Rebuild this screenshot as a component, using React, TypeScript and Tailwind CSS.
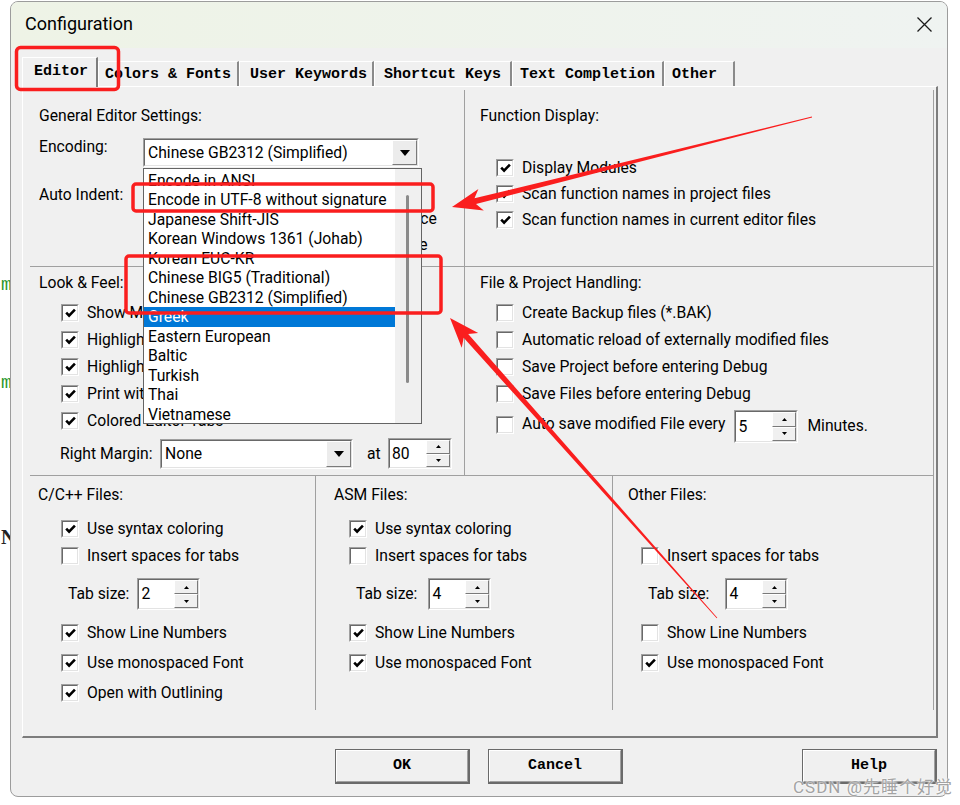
import React from "react";

const SUNKEN_OUT = "border border-t-[#a0a0a0] border-l-[#a0a0a0] border-b-white border-r-white";
const SUNKEN_IN = "border border-t-[#696969] border-l-[#696969] border-b-[#e3e3e3] border-r-[#e3e3e3]";

function CheckBox({ checked }: { checked?: boolean }) {
  return (
    <span className={`flex h-[18px] w-[18px] shrink-0 ${SUNKEN_OUT}`}>
      <span className={`flex flex-1 items-center justify-center bg-white ${SUNKEN_IN}`}>
        {checked ? (
          <svg width="11" height="10" viewBox="0 0 11 10">
            <path d="M1.2 4.6 L4.1 7.6 L9.9 1.6" fill="none" stroke="#000" strokeWidth="2.6" />
          </svg>
        ) : null}
      </span>
    </span>
  );
}

function CheckRow({ label, checked, h }: { label: string; checked?: boolean; h: string }) {
  return (
    <div className={`flex items-center gap-[8px] ${h}`}>
      <CheckBox checked={checked} />
      <span className="whitespace-nowrap leading-[20px]">{label}</span>
    </div>
  );
}

function SpinBtn({ up }: { up?: boolean }) {
  return (
    <div className="flex flex-1 items-center justify-center border border-t-white border-l-white border-b-[#7a7a7a] border-r-[#7a7a7a] bg-[#f0f0f0]">
      <svg width="5" height="3" viewBox="0 0 5 3">
        <polygon points={up ? "2.5,0 5,3 0,3" : "0,0 5,0 2.5,3"} fill="#000" />
      </svg>
    </div>
  );
}

function Spinner({ value, size }: { value: string; size: string }) {
  return (
    <div className={`flex shrink-0 ${SUNKEN_OUT} ${size}`}>
      <div className={`flex flex-1 bg-white ${SUNKEN_IN}`}>
        <div className="flex flex-1 items-center pl-[2px] leading-[20px]">{value}</div>
        <div className="flex w-[24px] flex-col">
          <SpinBtn up />
          <SpinBtn />
        </div>
      </div>
    </div>
  );
}

function Combo({ text, size }: { text: string; size: string }) {
  return (
    <div className={`flex shrink-0 ${SUNKEN_OUT} ${size}`}>
      <div className={`flex flex-1 items-center bg-white ${SUNKEN_IN}`}>
        <div className="flex-1 whitespace-nowrap pl-[3px] leading-[20px]">{text}</div>
        <div className="flex h-full w-[25px] items-center justify-center border border-t-white border-l-white border-b-[#7a7a7a] border-r-[#7a7a7a] bg-[#ececec]">
          <svg width="10" height="6" viewBox="0 0 10 6">
            <polygon points="0,0 10,0 5,6" fill="#000" />
          </svg>
        </div>
      </div>
    </div>
  );
}

const ENCODINGS = [
  "Encode in ANSI",
  "Encode in UTF-8 without signature",
  "Japanese Shift-JIS",
  "Korean Windows 1361 (Johab)",
  "Korean EUC-KR",
  "Chinese BIG5 (Traditional)",
  "Chinese GB2312 (Simplified)",
  "Greek",
  "Eastern European",
  "Baltic",
  "Turkish",
  "Thai",
  "Vietnamese",
  "Hebrew",
];

function EncodingList() {
  return (
    <div className="absolute left-0 top-[30px] z-20 flex h-[256px] w-[279px] overflow-hidden border border-[#646464] bg-white">
      <div className="w-[251px] shrink-0 pt-[1.5px]">
        {ENCODINGS.map((e) => (
          <div
            key={e}
            className={
              e === "Greek"
                ? "h-[19.5px] whitespace-nowrap bg-[#0078d7] pl-[4px] leading-[19.5px] text-white"
                : "h-[19.5px] whitespace-nowrap pl-[4px] leading-[19.5px]"
            }
          >
            {e}
          </div>
        ))}
      </div>
      <div className="flex-1 bg-[#f0f0f0]">
        <div className="ml-[11px] mt-[26px] h-[188px] w-[3px] rounded-full bg-[#8a8a8a]" />
      </div>
    </div>
  );
}

const TABS = [
  { label: "Editor", w: "w-[76px]", pl: "pl-[11px]", active: true },
  { label: "Colors & Fonts", w: "w-[141px]", pl: "pl-[6px]" },
  { label: "User Keywords", w: "w-[135px]", pl: "pl-[10px]" },
  { label: "Shortcut Keys", w: "w-[138px]", pl: "pl-[9px]" },
  { label: "Text Completion", w: "w-[152px]", pl: "pl-[7px]" },
  { label: "Other", w: "w-[71px]", pl: "pl-[7px]" },
];

function TabStrip() {
  return (
    <div className="flex h-[38px] items-end pl-[11px] font-['Liberation_Mono',monospace] text-[15px] font-bold">
      {TABS.map((t) =>
        t.active ? (
          <div
            key={t.label}
            className={`relative z-10 -mb-[1px] h-[30px] shrink-0 border-l border-t border-white border-r-2 border-r-[#7d7d7d] bg-[#f0f0f0] pt-[4px] leading-[19px] ${t.w} ${t.pl}`}
          >
            {t.label}
          </div>
        ) : (
          <div
            key={t.label}
            className={`h-[25px] shrink-0 whitespace-pre border-l border-t border-white border-r-2 border-r-[#8a8a8a] pt-[3px] leading-[19px] ${t.w} ${t.pl}`}
          >
            {t.label}
          </div>
        )
      )}
    </div>
  );
}

function GeneralSettings() {
  return (
    <div className="relative w-[435px] shrink-0 border-r border-[#a0a0a0] pl-[9px] pt-[16px]">
      <div className="leading-[20px]">General Editor Settings:</div>
      <div className="mt-[12px] flex">
        <div className="-mt-[1px] w-[104px] leading-[20px]">Encoding:</div>
        <div className="relative">
          <Combo text="Chinese GB2312 (Simplified)" size="h-[29px] w-[276px]" />
          <EncodingList />
        </div>
      </div>
      <div className="mt-[14px] flex items-start">
        <div className="flex h-[28px] w-[104px] items-center">Auto Indent:</div>
        <Combo text="Smart" size="h-[28px] w-[118px]" />
        <div className="-mt-[1px] ml-[25px] flex flex-col">
          <CheckRow label="Virtual Spaces" h="h-[26px]" />
          <CheckRow label="View White Space" h="h-[26px]" />
          <CheckRow label="View End of Line" h="h-[26px]" />
        </div>
      </div>
    </div>
  );
}

function FunctionDisplay() {
  return (
    <div className="flex-1 pl-[15px] pt-[16px]">
      <div className="leading-[20px]">Function Display:</div>
      <div className="mt-[29px] pl-[16px]">
        <CheckRow label="Display Modules" checked h="h-[26px]" />
        <CheckRow label="Scan function names in project files" checked h="h-[26px]" />
        <CheckRow label="Scan function names in current editor files" checked h="h-[26px]" />
      </div>
    </div>
  );
}

function LookAndFeel() {
  return (
    <div className="w-[435px] shrink-0 border-r border-[#a0a0a0] pl-[9px] pt-[6px]">
      <div className="leading-[20px]">Look &amp; Feel:</div>
      <div className="mt-[6px] pl-[22px]">
        <CheckRow label="Show Message Dialogs" checked h="h-[27px]" />
        <CheckRow label="Highlight Current Line" checked h="h-[27px]" />
        <CheckRow label="Highlight matching Braces" checked h="h-[27px]" />
        <CheckRow label="Print with syntax coloring" checked h="h-[27px]" />
        <CheckRow label="Colored Editor Tabs" checked h="h-[27px]" />
      </div>
      <div className="mt-[4px] flex items-center pl-[21px]">
        <span className="w-[100px] whitespace-nowrap">Right Margin:</span>
        <Combo text="None" size="h-[30px] w-[193px]" />
        <span className="ml-[14px] w-[21px]">at</span>
        <Spinner value="80" size="h-[31px] w-[64px]" />
      </div>
    </div>
  );
}

function FileHandling() {
  return (
    <div className="flex-1 pl-[15px] pt-[6px]">
      <div className="leading-[20px]">File &amp; Project Handling:</div>
      <div className="mt-[6px] pl-[16px]">
        <CheckRow label="Create Backup files (*.BAK)" h="h-[27px]" />
        <CheckRow label="Automatic reload of externally modified files" h="h-[27px]" />
        <CheckRow label="Save Project before entering Debug" h="h-[27px]" />
        <CheckRow label="Save Files before entering Debug" h="h-[27px]" />
        <div className="mt-[3px] flex items-start">
          <div className="mt-[6px]">
            <CheckBox />
          </div>
          <span className="ml-[8px] mt-[4px] whitespace-nowrap leading-[20px]">Auto save modified File every</span>
          <div className="ml-[9px]">
            <Spinner value="5" size="h-[33px] w-[64px]" />
          </div>
          <span className="ml-[9px] mt-[6px] leading-[20px]">Minutes.</span>
        </div>
      </div>
    </div>
  );
}

function FileTypeColumn({
  title,
  outer,
  checks,
  tabLabel,
  tab,
  tabValue,
  syntax,
  lineNumbers,
  outlining,
}: {
  title: string;
  outer: string;
  checks: string;
  tabLabel: string;
  tab: string;
  tabValue: string;
  syntax: boolean | null;
  lineNumbers: boolean;
  outlining: boolean;
}) {
  return (
    <div className={outer}>
      <div className="leading-[20px]">{title}</div>
      <div className={`mt-[10px] ${checks}`}>
        {syntax === null ? (
          <div className="h-[27px]" />
        ) : (
          <CheckRow label="Use syntax coloring" checked={syntax} h="h-[27px]" />
        )}
        <CheckRow label="Insert spaces for tabs" h="h-[27px]" />
      </div>
      <div className={`mt-[9px] flex h-[32px] items-center ${tabLabel}`}>
        <span className="whitespace-nowrap">Tab size:</span>
        <div className={tab}>
          <Spinner value={tabValue} size="h-[32px] w-[63px]" />
        </div>
      </div>
      <div className={`mt-[8px] ${checks}`}>
        <CheckRow label="Show Line Numbers" checked={lineNumbers} h="h-[30px]" />
        <CheckRow label="Use monospaced Font" checked h="h-[30px]" />
        {outlining ? <CheckRow label="Open with Outlining" checked h="h-[30px]" /> : null}
      </div>
    </div>
  );
}

function EditorPage() {
  return (
    <div className="ml-[11px] w-[916px] border-l border-t border-white border-b-2 border-r-2 border-b-[#7d7d7d] border-r-[#7d7d7d] pl-[7px] pt-[3px]">
      <div className="w-[904px] border-r border-[#a0a0a0]">
        <div className="flex h-[177px] border-b border-[#a0a0a0]">
          <GeneralSettings />
          <FunctionDisplay />
        </div>
        <div className="flex h-[209px] border-b border-[#a0a0a0]">
          <LookAndFeel />
          <FileHandling />
        </div>
        <div className="flex h-[234px]">
          <FileTypeColumn
            title="C/C++ Files:"
            outer="w-[286px] shrink-0 border-r border-[#a0a0a0] pl-[8px] pt-[9px]"
            checks="pl-[23px]"
            tabLabel="pl-[30px]"
            tab="ml-[8px]"
            tabValue="2"
            syntax={true}
            lineNumbers={true}
            outlining={true}
          />
          <FileTypeColumn
            title="ASM Files:"
            outer="w-[297px] shrink-0 border-r border-[#a0a0a0] pl-[18px] pt-[9px]"
            checks="pl-[15px]"
            tabLabel="pl-[22px]"
            tab="ml-[11px]"
            tabValue="4"
            syntax={true}
            lineNumbers={true}
            outlining={false}
          />
          <FileTypeColumn
            title="Other Files:"
            outer="flex-1 pl-[15px] pt-[9px]"
            checks="pl-[13px]"
            tabLabel="pl-[20px]"
            tab="ml-[16px]"
            tabValue="4"
            syntax={null}
            lineNumbers={false}
            outlining={false}
          />
        </div>
      </div>
      <div className="h-[26px]" />
    </div>
  );
}

function DlgButton({ label, cls }: { label: string; cls: string }) {
  return (
    <div className={`flex h-[35px] w-[135px] shrink-0 border border-b-2 border-r-2 border-[#6a6a6a] ${cls}`}>
      <div className="flex flex-1 items-center justify-center border border-t-white border-l-white border-b-[#a0a0a0] border-r-[#a0a0a0] bg-[#f0f0f0] font-['Liberation_Mono',monospace] text-[15px] font-bold">
        {label}
      </div>
    </div>
  );
}

function EditorPeek() {
  return (
    <div className="flex w-[10px] shrink-0 flex-col overflow-hidden pl-[1px] font-['Liberation_Mono',monospace]">
      <span className="mt-[276px] text-[18px] leading-[18px] text-[#2a962a]">m</span>
      <span className="mt-[80px] text-[18px] leading-[18px] text-[#2a962a]">m</span>
      <span className="mt-[135px] font-['Liberation_Serif',serif] text-[20px] font-bold leading-[20px] text-[#222]">N</span>
    </div>
  );
}

function Annotations() {
  const red = "#fa1e1e";
  return (
    <svg className="pointer-events-none absolute left-0 top-0 z-30" width="960" height="805" viewBox="0 0 960 805">
      <rect x="16.5" y="47.5" width="102" height="42" rx="4" fill="none" stroke={red} strokeWidth="3.5" />
      <rect x="133" y="184" width="300" height="27" rx="3" fill="none" stroke={red} strokeWidth="3.5" />
      <rect x="126" y="256" width="315" height="57" rx="3" fill="none" stroke={red} strokeWidth="3.5" />
      <polygon
        points="812.1,117.4 476.0,204.1 483.8,210.4 452,207 478.4,189.0 474.5,198.3 811.9,116.6"
        fill={red}
      />
      <polygon
        points="717.3,617.7 468.2,334.0 478.2,333.1 450,318 461.7,347.7 463.7,337.8 716.7,618.3"
        fill={red}
      />
    </svg>
  );
}

export default function App() {
  return (
    <div className="relative flex h-[805px] w-[960px] overflow-hidden bg-white font-['Roboto',sans-serif] text-[15.7px] text-black">
      <EditorPeek />
      <div className="mt-[1px] flex h-[796px] w-[938px] shrink-0 flex-col overflow-hidden rounded-[8px] border border-[#9c9c9c] bg-[#f0f0f0]">
        <div className="flex h-[46px] shrink-0 items-start justify-between bg-linear-to-r from-[#eef3e6] to-[#eff3f1]">
          <span className="ml-[14px] mt-[11px] text-[18px] leading-[22px]">Configuration</span>
          <svg className="mr-[15px] mt-[15px]" width="15" height="15" viewBox="0 0 15 15">
            <path d="M0.5 0.5 L14.5 14.5 M14.5 0.5 L0.5 14.5" stroke="#1a1a1a" strokeWidth="1.3" />
          </svg>
        </div>
        <TabStrip />
        <EditorPage />
        <div className="mt-[11px] flex">
          <DlgButton label="OK" cls="ml-[324px]" />
          <DlgButton label="Cancel" cls="ml-[18px]" />
          <DlgButton label="Help" cls="ml-[179px]" />
        </div>
      </div>
      <Annotations />
      <div className="absolute left-[793px] top-[776px] z-40 whitespace-nowrap font-['Roboto','Noto_Sans_CJK_SC',sans-serif] text-[17px] leading-[22px] tracking-[1px] text-[#a3a3a3] [text-shadow:0_0_2px_#fff,0_0_2px_#fff]">
        CSDN @先睡个好觉
      </div>
    </div>
  );
}
